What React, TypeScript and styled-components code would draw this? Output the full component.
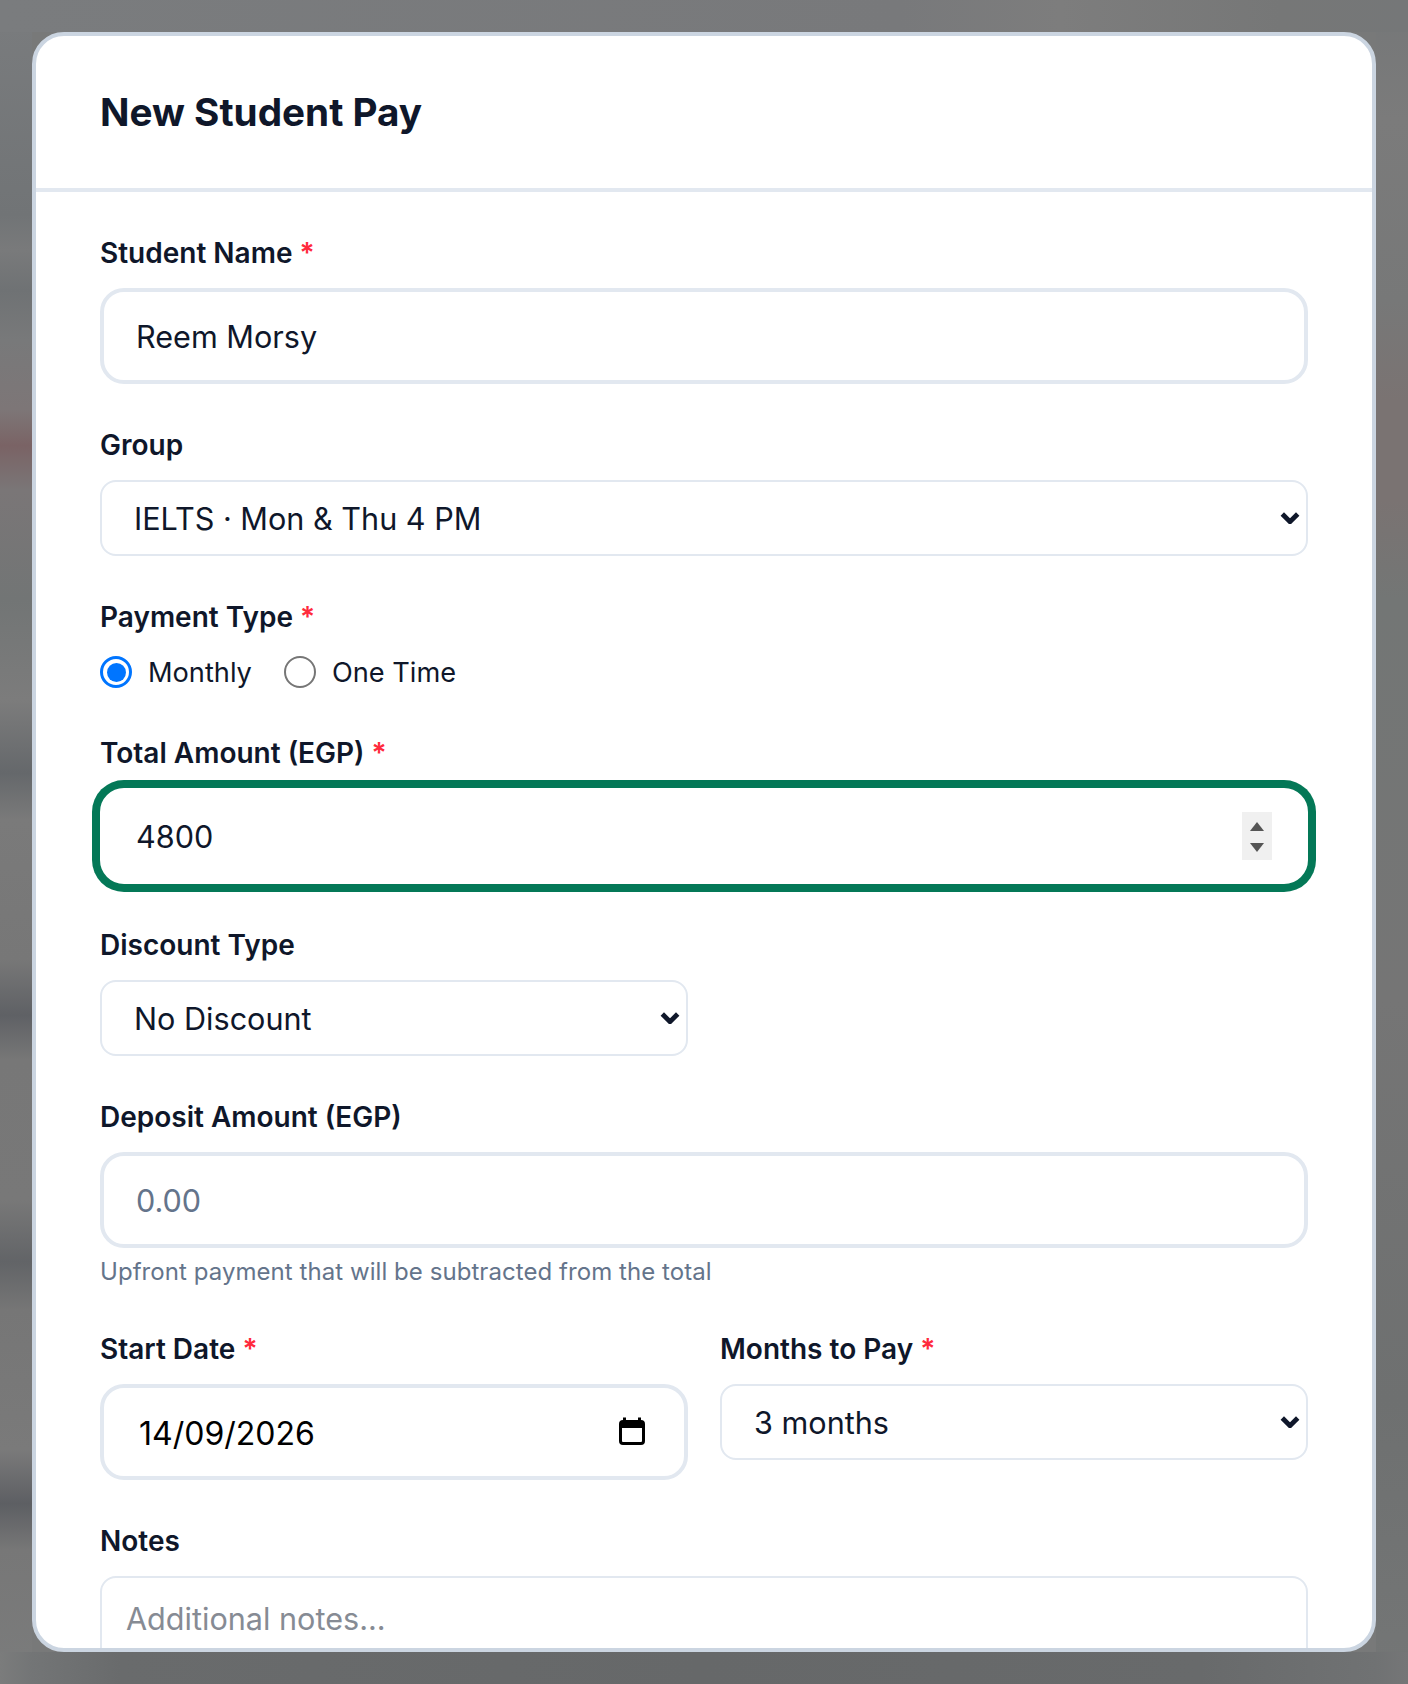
import React from "react";
import styled, { createGlobalStyle, css } from "styled-components";

const Global = createGlobalStyle`
  html, body { margin: 0; padding: 0; }
  body { font-family: "Inter", "Liberation Sans", sans-serif; color: #0f172a; }
  * { box-sizing: border-box; }
`;

const Page = styled.div`
  width: 100%;
  height: 1684px;
  padding: 32px;
  overflow: hidden;
  background-color: #787979;
  background-repeat: no-repeat;
  background-position: 0 100%, 0 0, 0 0, 100% 0;
  background-size: 100% 32px, 100% 32px, 32px 100%, 32px 100%;
  background-image:
    linear-gradient(90deg, #7b7c7c 0, #737576 32px, #696b6c 120px, #666869 700px, #686a6b 1200px, #707273 1376px, #757677 1408px),
    linear-gradient(90deg, #7a7c7e 0, #78797b 900px, #7d7d7d 1060px, #767777 1280px, #757778 1408px),
    linear-gradient(180deg, #7a7c7e 0, #717476 215px, #797a7b 250px, #6f7274 290px, #78797a 340px, #7d7677 410px, #7a6365 446px, #7a7677 490px, #727575 600px, #7c7c7c 700px, #65686b 773px, #7a7a7a 820px, #777777 960px, #5f6165 1015px, #777777 1060px, #787878 1200px, #626467 1262px, #767676 1310px, #7a7a7a 1450px, #5d5f63 1504px, #777777 1550px, #7b7c7c 1684px),
    linear-gradient(180deg, #757778 0, #7b7b7b 120px, #777878 300px, #7a7372 400px, #7a7372 500px, #737675 600px, #757575 1000px, #6e7070 1400px, #747676 1684px);
`;

const Card = styled.section`
  height: 1620px;
  background: #ffffff;
  border: 4px solid #cbd5e1;
  border-radius: 32px;
  overflow: hidden;
  display: flex;
  flex-direction: column;
`;

const Header = styled.header`
  flex: none;
  padding: 48px 64px;
  border-bottom: 4px solid #e2e8f0;
`;

const Title = styled.h2`
  margin: 0;
  font-size: 38.7px;
  line-height: 56px;
  font-weight: 700;
  color: #0f172a;
`;

const Form = styled.form`
  flex: 1;
  min-height: 0;
  overflow: hidden;
  padding: 40px 64px;
  display: flex;
  flex-direction: column;
  gap: 40px;
`;

const Field = styled.div`
  display: flex;
  flex-direction: column;
  min-width: 0;
`;

const Label = styled.label`
  display: block;
  padding-top: 1px;
  margin-bottom: 15px;
  font-size: 28px;
  line-height: 40px;
  font-weight: 600;
  color: #0f172a;
`;

const Req = styled.span`
  color: #ff2a3c;
`;

const fieldText = css`
  width: 100%;
  font-family: "Inter", "Liberation Sans", sans-serif;
  font-size: 30.6px;
  color: #0f172a;
  background: #ffffff;
  outline: none;
  margin: 0;
`;

const TextInput = styled.input<{ $focused?: boolean }>`
  ${fieldText}
  display: block;
  height: 96px;
  padding: 0 32px;
  border-radius: 24px;
  border: 4px solid #e2e8f0;
  &::placeholder { color: #64748b; opacity: 1; }
  ${(p) =>
    p.$focused &&
    css`
      border: 4px solid #ffffff;
      box-shadow: 0 0 0 4px #047857, 0 0 0 8px #047857;
    `}
`;

const DateInput = styled(TextInput)`
  color: #000000;
  font-size: 32px;
  padding: 2px 32px 0 35px;
`;

const Select = styled.select`
  ${fieldText}
  display: block;
  height: 76px;
  padding: 0 32px;
  border: 2px solid #e2e8f0;
  border-radius: 16px;
  appearance: none;
`;

const Notes = styled.textarea`
  ${fieldText}
  display: block;
  flex: none;
  height: 160px;
  padding: 17px 24px;
  line-height: 48px;
  border: 2px solid #e2e8f0;
  border-radius: 16px;
  resize: none;
  &::placeholder { color: #868b94; opacity: 1; }
`;

const ControlWrap = styled.div`
  position: relative;
`;

const Chevron = styled.svg`
  position: absolute;
  right: 8px;
  top: 50%;
  width: 20px;
  height: 12px;
  margin-top: -6px;
  pointer-events: none;
`;

const Spinner = styled.div`
  position: absolute;
  right: 36px;
  top: 24px;
  width: 30px;
  height: 48px;
  background: #f0f0f0;
`;

const CalendarIcon = styled.svg`
  position: absolute;
  right: 43px;
  top: 33px;
  width: 26px;
  height: 28px;
`;

const RadioRow = styled.div`
  display: flex;
  align-items: center;
  gap: 32px;
  height: 40px;
`;

const RadioOption = styled.label`
  display: flex;
  align-items: center;
  gap: 16px;
  padding-top: 1px;
  font-size: 27.2px;
  line-height: 40px;
  color: #0f172a;
`;

const Radio = styled.input`
  appearance: none;
  flex: none;
  width: 32px;
  height: 32px;
  margin: -1px 0 0;
  border-radius: 50%;
  border: 2.5px solid #767676;
  background: #ffffff;
  &:checked {
    border: 3px solid #0075ff;
    padding: 3.5px;
    background: #0075ff content-box;
  }
`;

const Hint = styled.p`
  margin: 8px 0 0;
  font-size: 24px;
  line-height: 32px;
  letter-spacing: 0.06px;
  color: #64748b;
`;

const TwoCol = styled.div`
  display: grid;
  grid-template-columns: 1fr 1fr;
  gap: 32px;
  align-items: start;
`;

const ChevronDown = () => (
  <Chevron viewBox="0 0 20 12" fill="none">
    <path d="M2.3 2 L10 9.7 L17.7 2" stroke="#0f172a" strokeWidth="4.8" />
  </Chevron>
);

export default function App() {
  return (
    <Page>
      <Global />
      <Card>
        <Header>
          <Title>New Student Pay</Title>
        </Header>
        <Form>
          <Field>
            <Label>
              Student Name <Req>*</Req>
            </Label>
            <TextInput readOnly value="Reem Morsy" />
          </Field>
          <Field>
            <Label>Group</Label>
            <ControlWrap>
              <Select defaultValue="ielts">
                <option value="ielts">IELTS · Mon &amp; Thu 4 PM</option>
              </Select>
              <ChevronDown />
            </ControlWrap>
          </Field>
          <Field>
            <Label>
              Payment Type <Req>*</Req>
            </Label>
            <RadioRow>
              <RadioOption>
                <Radio type="radio" name="ptype" defaultChecked />
                Monthly
              </RadioOption>
              <RadioOption>
                <Radio type="radio" name="ptype" />
                One Time
              </RadioOption>
            </RadioRow>
          </Field>
          <Field>
            <Label>
              Total Amount (EGP) <Req>*</Req>
            </Label>
            <ControlWrap>
              <TextInput $focused readOnly value="4800" />
              <Spinner>
                <svg width="30" height="48" viewBox="0 0 30 48">
                  <path d="M8 19 L15 10 L22 19 Z" fill="#555555" />
                  <path d="M8 31 L22 31 L15 40 Z" fill="#555555" />
                </svg>
              </Spinner>
            </ControlWrap>
          </Field>
          <TwoCol>
            <Field>
              <Label>Discount Type</Label>
              <ControlWrap>
                <Select defaultValue="none">
                  <option value="none">No Discount</option>
                </Select>
                <ChevronDown />
              </ControlWrap>
            </Field>
          </TwoCol>
          <Field>
            <Label>Deposit Amount (EGP)</Label>
            <TextInput placeholder="0.00" />
            <Hint>Upfront payment that will be subtracted from the total</Hint>
          </Field>
          <TwoCol>
            <Field>
              <Label>
                Start Date <Req>*</Req>
              </Label>
              <ControlWrap>
                <DateInput readOnly value="14/09/2026" />
                <CalendarIcon viewBox="0 0 26 28" fill="none">
                  <rect x="1.5" y="4.5" width="23" height="22" rx="2.5" stroke="#000000" strokeWidth="3" />
                  <rect x="1.5" y="4" width="23" height="7" fill="#000000" />
                  <rect x="4" y="0.5" width="3" height="5" fill="#000000" />
                  <rect x="19" y="0.5" width="3" height="5" fill="#000000" />
                </CalendarIcon>
              </ControlWrap>
            </Field>
            <Field>
              <Label>
                Months to Pay <Req>*</Req>
              </Label>
              <ControlWrap>
                <Select defaultValue="3">
                  <option value="3">3 months</option>
                </Select>
                <ChevronDown />
              </ControlWrap>
            </Field>
          </TwoCol>
          <Field>
            <Label>Notes</Label>
            <Notes placeholder="Additional notes..." />
          </Field>
        </Form>
      </Card>
    </Page>
  );
}
